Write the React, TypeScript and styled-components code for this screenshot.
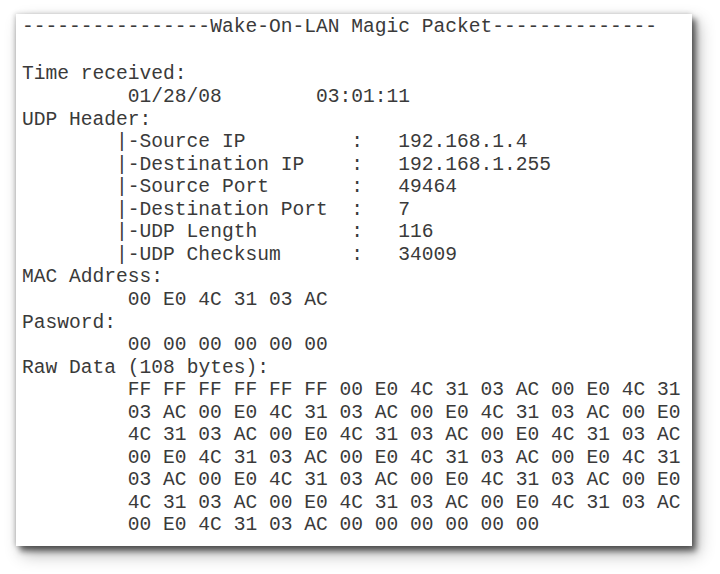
import React from "react";
import styled, { createGlobalStyle } from "styled-components";

const GlobalStyle = createGlobalStyle`
  html, body {
    margin: 0;
    padding: 0;
    background: #ffffff;
  }
`;

const Page = styled.div`
  box-sizing: border-box;
  width: 720px;
  min-height: 574px;
  padding: 14px 0 0 16px;
  background: #ffffff;
`;

const Sheet = styled.div`
  box-sizing: border-box;
  width: 676px;
  height: 532px;
  padding: 2px 0 0 6px;
  background: #ffffff;
  box-shadow: 4px 5px 6px rgba(0, 0, 0, 0.55), 6px 8px 16px rgba(0, 0, 0, 0.3),
    -1px 0 5px rgba(0, 0, 0, 0.2);
  font-family: "Liberation Mono", "Courier New", monospace;
  font-size: 19.6px;
  line-height: 22.55px;
  color: #3a3a3a;
  white-space: pre;
`;

const Title = styled.div`
  margin-bottom: 2.4px;
`;

const BlankLine = styled.div`
  height: 22.55px;
`;

const Label = styled.div``;

const Indented = styled.div<{ $cols: number }>`
  padding-left: ${(p) => p.$cols}ch;
`;

const FieldList = styled.div`
  display: grid;
  grid-template-columns: 20ch 4ch auto;
  padding-left: 8ch;
`;

const FieldName = styled.span``;
const FieldColon = styled.span``;
const FieldValue = styled.span``;

const DateRow = styled.div`
  display: grid;
  grid-template-columns: 16ch auto;
  padding-left: 9ch;
`;

const HexBlock = styled.div`
  padding-left: 9ch;
`;

const HexRow = styled.div``;

const fields: [string, string][] = [
  ["|-Source IP", "192.168.1.4"],
  ["|-Destination IP", "192.168.1.255"],
  ["|-Source Port", "49464"],
  ["|-Destination Port", "7"],
  ["|-UDP Length", "116"],
  ["|-UDP Checksum", "34009"],
];

const mac = ["00", "E0", "4C", "31", "03", "AC"];
const password = ["00", "00", "00", "00", "00", "00"];

const rawBytes: string[] = [
  ...Array(6).fill("FF"),
  ...Array.from({ length: 16 }).flatMap(() => mac),
  ...password,
];

const hexRows: string[] = [];
for (let i = 0; i < rawBytes.length; i += 16) {
  hexRows.push(rawBytes.slice(i, i + 16).join(" "));
}

export default function App() {
  return (
    <>
      <GlobalStyle />
      <Page>
        <Sheet>
          <Title>----------------Wake-On-LAN Magic Packet--------------</Title>
          <BlankLine />
          <Label>Time received:</Label>
          <DateRow>
            <span>01/28/08</span>
            <span>03:01:11</span>
          </DateRow>
          <Label>UDP Header:</Label>
          <FieldList>
            {fields.map(([name, value]) => (
              <React.Fragment key={name}>
                <FieldName>{name}</FieldName>
                <FieldColon>:</FieldColon>
                <FieldValue>{value}</FieldValue>
              </React.Fragment>
            ))}
          </FieldList>
          <Label>MAC Address:</Label>
          <Indented $cols={9}>{mac.join(" ")}</Indented>
          <Label>Pasword:</Label>
          <Indented $cols={9}>{password.join(" ")}</Indented>
          <Label>Raw Data ({rawBytes.length} bytes):</Label>
          <HexBlock>
            {hexRows.map((row, i) => (
              <HexRow key={i}>{row}</HexRow>
            ))}
          </HexBlock>
        </Sheet>
      </Page>
    </>
  );
}
